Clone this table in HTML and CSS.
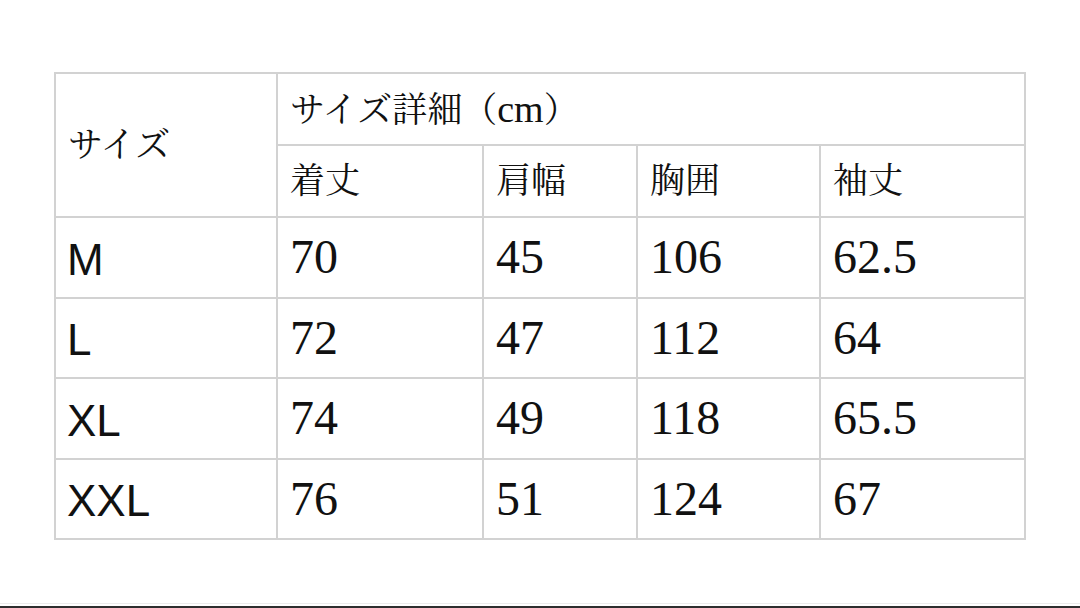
FILE: index.html
```html
<!DOCTYPE html>
<html lang="ja">
<head>
<meta charset="utf-8">
<title>サイズ表</title>
<link rel="stylesheet" href="styles.css">
</head>
<body>
<main class="page">
  <table class="size-table">
    <colgroup>
      <col class="c-size">
      <col class="c-len">
      <col class="c-shoulder">
      <col class="c-chest">
      <col class="c-sleeve">
    </colgroup>
    <thead>
      <tr class="head-row">
        <th class="jp" rowspan="2">サイズ</th>
        <th class="jp" colspan="4">サイズ詳細（<span class="unit">cm</span>）</th>
      </tr>
      <tr class="head-row">
        <th class="jp">着丈</th>
        <th class="jp">肩幅</th>
        <th class="jp">胸囲</th>
        <th class="jp">袖丈</th>
      </tr>
    </thead>
    <tbody>
      <tr class="data-row">
        <td class="size">M</td>
        <td class="num">70</td>
        <td class="num">45</td>
        <td class="num">106</td>
        <td class="num">62.5</td>
      </tr>
      <tr class="data-row">
        <td class="size">L</td>
        <td class="num">72</td>
        <td class="num">47</td>
        <td class="num">112</td>
        <td class="num">64</td>
      </tr>
      <tr class="data-row">
        <td class="size">XL</td>
        <td class="num">74</td>
        <td class="num">49</td>
        <td class="num">118</td>
        <td class="num">65.5</td>
      </tr>
      <tr class="data-row">
        <td class="size">XXL</td>
        <td class="num">76</td>
        <td class="num">51</td>
        <td class="num">124</td>
        <td class="num">67</td>
      </tr>
    </tbody>
  </table>
</main>
<div class="edge"></div>
</body>
</html>
```

FILE: styles.css
```css
html, body {
  margin: 0;
  padding: 0;
  background: #ffffff;
}

body {
  width: 1080px;
  height: 608px;
  overflow: hidden;
  color: #111111;
}

.page {
  box-sizing: border-box;
  height: 603px;
  padding: 72px 0 0 54px;
}

.size-table {
  table-layout: fixed;
  border-collapse: collapse;
  width: 972px;
}

.c-size { width: 222px; }
.c-len { width: 206px; }
.c-shoulder { width: 154px; }
.c-chest { width: 183px; }
.c-sleeve { width: 205px; }

.size-table th,
.size-table td {
  border: 2px solid #d2d2d2;
  padding: 0 0 0 12px;
  text-align: left;
  vertical-align: middle;
  font-weight: normal;
  white-space: nowrap;
}

.head-row {
  height: 72px;
}

.data-row {
  height: 80.5px;
}

.jp {
  font-family: "Liberation Serif", "Noto Serif CJK JP", "Noto Sans CJK JP", serif;
  font-size: 35px;
  line-height: 1;
}

.unit {
  font-size: 38px;
}

.num {
  font-family: "Liberation Serif", "Times New Roman", serif;
  font-size: 48px;
  line-height: 1;
  padding-top: 6px;
}

.size-table td.size {
  font-family: "Liberation Sans", Arial, sans-serif;
  font-size: 44px;
  line-height: 1;
  padding-left: 11px;
  padding-top: 5px;
}

.edge {
  height: 2px;
  border-top: 1px solid #ececec;
  border-bottom: 2px solid #2e2e2e;
}
```
